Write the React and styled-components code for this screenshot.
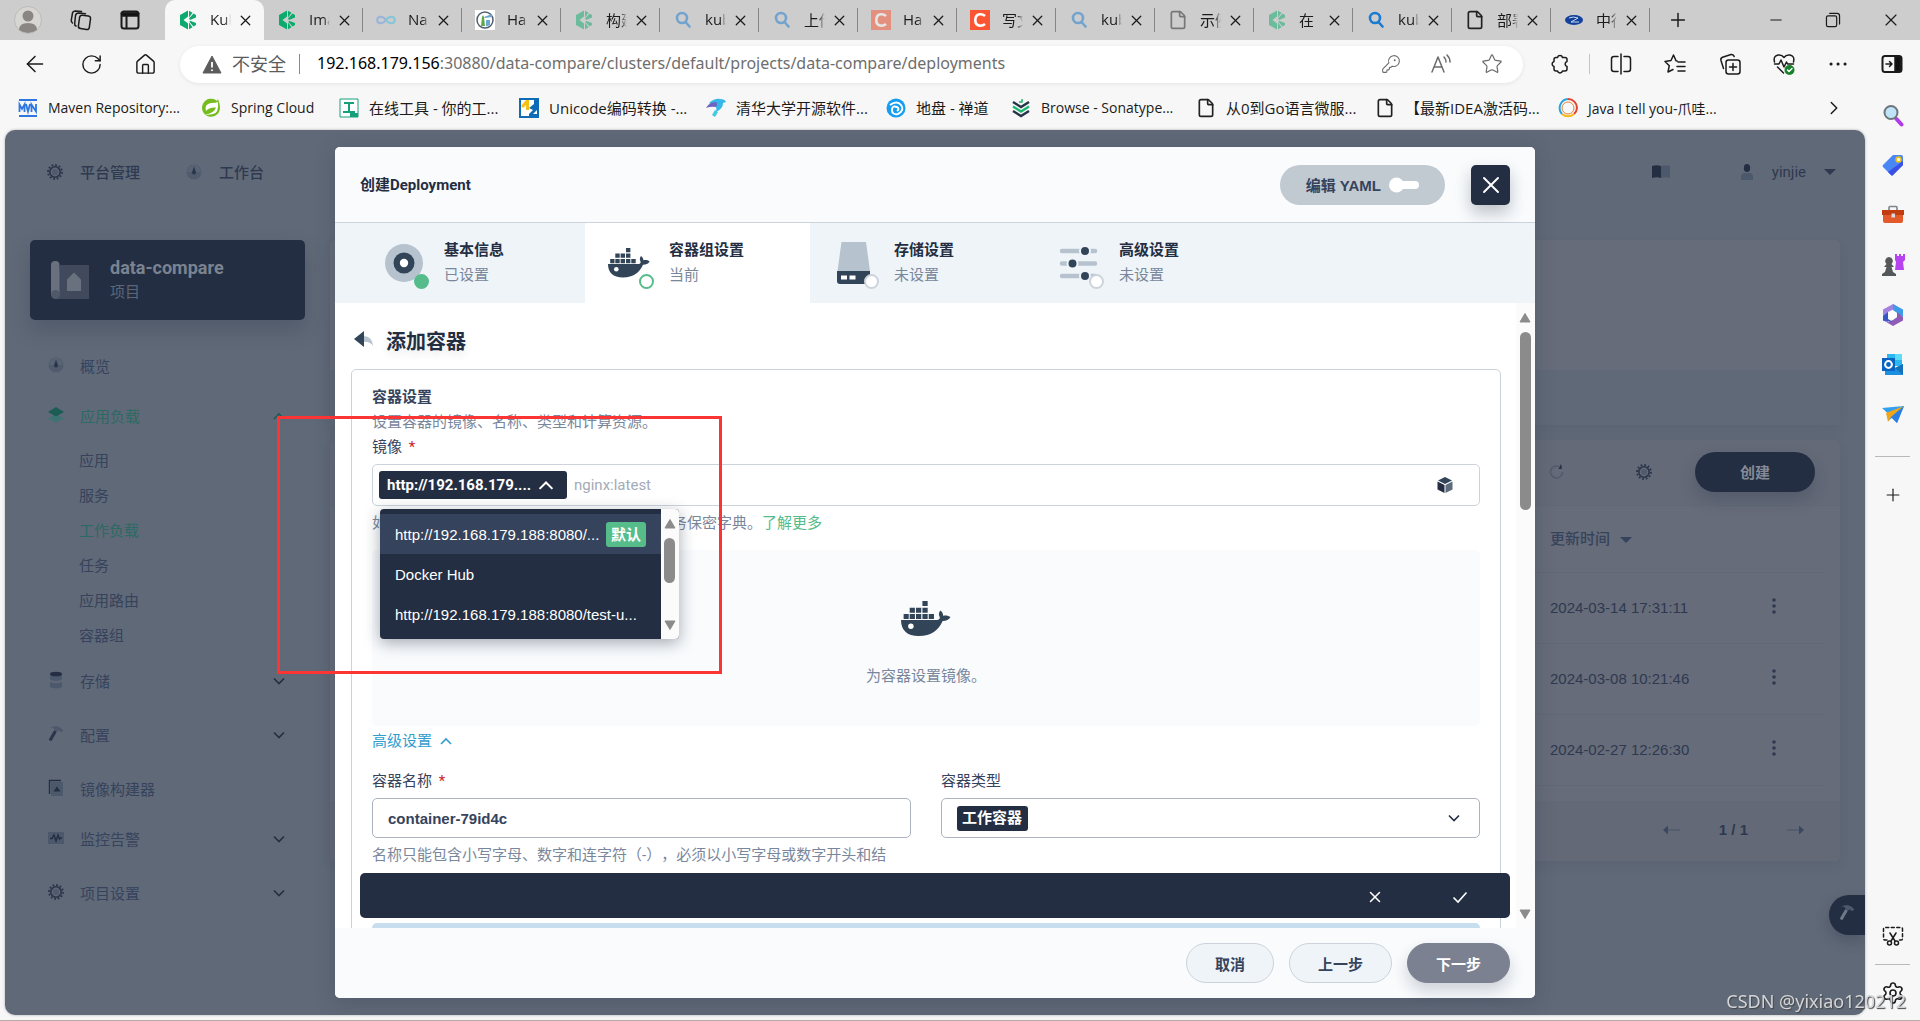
import React from "react";
import styled, { createGlobalStyle, css } from "styled-components";
import {
  ArrowLeft,
  ChevronRight,
  File,
  House,
  KeyRound,
  Minus,
  Plus,
  RotateCw,
  Search,
  Settings,
  Star,
  X,
} from "lucide-react";

const navy = "#242e42";
const dim = "#36435c";
const chromeFont = `"Open Sans", "Noto Sans CJK SC", sans-serif`;
const appFont = `Roboto, "Noto Sans CJK SC", sans-serif`;
const plainFont = `"Liberation Sans", "Noto Sans CJK SC", sans-serif`;

const tabs = [
  { icon: "kube", title: "Kub", active: true },
  { icon: "kube", title: "Ima" },
  { icon: "loop", title: "Na", faded: true },
  { icon: "harbor", title: "Ha" },
  { icon: "kube", title: "构建", faded: true },
  { icon: "search", title: "kub", faded: true },
  { icon: "search", title: "上传", faded: true },
  { icon: "csdn", title: "Ha", faded: true },
  { icon: "csdn", title: "写文" },
  { icon: "search", title: "kub", faded: true },
  { icon: "file", title: "示例", faded: true },
  { icon: "kube", title: "在", faded: true },
  { icon: "search", title: "kub" },
  { icon: "file", title: "部署" },
  { icon: "bank", title: "中行" },
];

const bookmarks = [
  { icon: "mvn", name: "Maven Repository:...", width: 132, latin: true },
  { icon: "spring", name: "Spring Cloud", width: 87, latin: true },
  { icon: "tool", name: "在线工具 - 你的工...", width: 129 },
  { icon: "unicode", name: "Unicode编码转换 -...", width: 136 },
  { icon: "bird", name: "清华大学开源软件...", width: 129 },
  { icon: "zen", name: "地盘 - 禅道", width: 74 },
  { icon: "nexus", name: "Browse - Sonatype...", width: 134, latin: true },
  { icon: "file", name: "从0到Go语言微服...", width: 128 },
  { icon: "file", name: "【最新IDEA激活码...", width: 132 },
  { icon: "ring", name: "Java I tell you-爪哇...", width: 136, latin: true },
];

const workloads = ["应用", "服务", "工作负载", "任务", "应用路由", "容器组"];

const menu = [
  { icon: "disk", name: "存储", open: true },
  { icon: "hammer", name: "配置", open: true },
  { icon: "image", name: "镜像构建器" },
  { icon: "monitor", name: "监控告警", open: true },
  { icon: "gear", name: "项目设置", open: true },
];

const rows = [
  "2024-03-14 17:31:11",
  "2024-03-08 10:21:46",
  "2024-02-27 12:26:30",
];

const steps = [
  { icon: "disc", name: "基本信息", status: "已设置", state: "done" },
  { icon: "docker", name: "容器组设置", status: "当前", state: "current" },
  { icon: "storage", name: "存储设置", status: "未设置" },
  { icon: "sliders", name: "高级设置", status: "未设置" },
];

/* ---------- icons ---------- */

const Chevron = ({ size = 14, up, color = "currentColor" }) => (
  <svg width={size} height={size} viewBox="0 0 14 14" fill="none">
    <path
      d={up ? "M2 10l5-5 5 5" : "M2 4.5l5 5 5-5"}
      stroke={color}
      strokeWidth="1.6"
    />
  </svg>
);

const Caret = ({ up, width = 12, color = "currentColor" }) => (
  <svg width={width} height={width} viewBox="0 0 12 12">
    <path
      d={up ? "M6 1.5L11 10H1z" : "M1 2h10L6 10.500z"}
      fill={color}
      stroke={color}
      strokeLinejoin="round"
    />
  </svg>
);

const FlatCaret = () => (
  <svg width="12" height="8" viewBox="0 0 12 8">
    <path d="M0 1h12L6 7z" fill="currentColor" />
  </svg>
);

const Gear = ({ size = 16 }) => (
  <svg width={size} height={size} viewBox="0 0 16 16" fill="none">
    <circle cx="8" cy="8" r="3" fill="#505b6d" />
    <circle cx="8" cy="8" r="5.200" stroke="#2a354a" strokeWidth="1.600" />
    <circle
      cx="8"
      cy="8"
      r="7"
      stroke="#2a354a"
      strokeWidth="1.800"
      strokeDasharray="1.830 1.830"
    />
  </svg>
);

const Docker = ({ width = 42 }) => (
  <svg width={width} viewBox="0 0 42 30">
    <g fill="#324558">
      <path d="M18 0h4.400v4.200H18zM7.300 5.600h4.400v4.200H7.300zM12.600 5.600H17v4.200h-4.400zM18 5.600h4.400v4.200H18zM2.200 11h4.300v4.200H2.200zM7.300 11h4.400v4.200H7.300zM12.600 11H17v4.200h-4.400zM18 11h4.400v4.200H18zM23.300 11h4.400v4.200h-4.400z" />
      <path d="M0 16H30.500C32.500 15.600 33 14.500 32.400 13.200 31.400 11.500 31.800 9.400 33 8 34.600 9.200 35.400 10.600 35.400 12.300 37.500 11.800 40 12.200 41.600 13.400 40.400 15.600 38 16.600 35 16.800 31.600 24.600 25.400 29.500 15 29.500 5 29.500 0 24.500 0 16Z" />
    </g>
    <circle cx="8.300" cy="21.300" r="2.300" fill="#fff" />
  </svg>
);

const Hammer = ({ light }) => (
  <svg width="16" height="18" viewBox="0 0 16 18">
    <path
      d="M7.500 6L2 15.500"
      stroke={light ? "#6f7886" : "#2a354a"}
      strokeWidth="3"
    />
    <path
      d="M2.500 2.500C6 .6 10.500.8 12.500 2.800L15.500 5.200 13 7.300 11 5.600 8.500 6.500 6.500 5.300C7 3.500 5 2.800 2.500 2.500Z"
      fill={light ? "#4d586c" : "#4c586b"}
    />
  </svg>
);

function MenuIcon({ name }) {
  switch (name) {
    case "gear":
      return <Gear />;
    case "hammer":
      return <Hammer />;
    case "dash":
      return (
        <svg width="16" height="16" viewBox="0 0 16 16">
          <circle cx="8" cy="8" r="7.500" fill="#505b6d" />
          <path d="M1 8a7 7 0 0114 0z" fill="#586375" />
          <path d="M8 2.500l2 6a2 2 0 01-4 0z" fill="#2a354a" />
        </svg>
      );
    case "layers":
      return (
        <svg width="16" height="16" viewBox="0 0 16 16">
          <path d="M8 7l8 4.500-8 4-8-4z" fill="#3f7371" />
          <path d="M8 0l8 5-8 4.500L0 5z" fill="#1b5c55" />
        </svg>
      );
    case "disk":
      return (
        <svg width="14" height="18" viewBox="0 0 14 18">
          <path d="M1 3v5c0 2.500 12 2.500 12 0V3zM1 11v4.500c0 2.500 12 2.500 12 0V11c-2 1.500-10 1.500-12 0z" fill="#4c586b" />
          <ellipse cx="7" cy="3" rx="6" ry="2.300" fill="#242e42" />
        </svg>
      );
    case "image":
      return (
        <svg width="16" height="18" viewBox="0 0 16 18">
          <path d="M3 3h12v14H3z" fill="#4c586b" />
          <path d="M1.500 15V1.500H13" stroke="#242e42" strokeWidth="1.400" fill="none" />
          <path d="M9 7.500l3.500 5h-7z" fill="#242e42" />
        </svg>
      );
    default:
      return (
        <svg width="16" height="12" viewBox="0 0 16 12">
          <path d="M0 0h16v12H0z" fill="#4c586b" />
          <path d="M2 6.500h2L6 3l2 6 2-6 1.500 4 1-1H14" stroke="#242e42" strokeWidth="1.400" fill="none" />
        </svg>
      );
  }
}

function StepIcon({ name }) {
  if (name === "docker") return <Docker />;
  if (name === "disc")
    return (
      <svg width="40" height="40" viewBox="0 0 40 40">
        <circle cx="20" cy="20" r="19" fill="#b6c2cd" />
        <circle cx="20" cy="20" r="10.500" fill="#324558" />
        <circle cx="20" cy="20" r="4.200" fill="#fff" />
      </svg>
    );
  if (name === "storage")
    return (
      <svg width="40" height="42" viewBox="0 0 40 42">
        <path d="M7.500 0h24.500L36 29H3.500z" fill="#b6c2cd" />
        <path d="M3 29h33v10q0 3-3 3H6q-3 0-3-3z" fill="#324558" />
        <path d="M7 33.500h6v4H7zM15.500 33.500h6v4h-6z" fill="#fff" />
      </svg>
    );
  return (
    <svg width="40" height="34" viewBox="0 0 40 34">
      <g stroke="#b6c2cd" strokeWidth="4.500" strokeLinecap="round">
        <path d="M3 5h33M3 17.500h33M3 30h33" />
      </g>
      <g fill="#324558" stroke="#eff4f9" strokeWidth="2">
        <circle cx="26" cy="5" r="5" />
        <circle cx="13.500" cy="17.500" r="5" />
        <circle cx="26" cy="30" r="5" />
      </g>
    </svg>
  );
}

function SiteIcon({ name }) {
  const box = { width: 20, height: 20, viewBox: "0 0 20 20" };
  switch (name) {
    case "kube":
      return (
        <svg {...box} fill="#0caa6c">
          <path d="M10 .5L2 5v10l8 4.500v-6L5.500 10 10 6.500z" />
          <path d="M11 .8l3.500 2L11 7.500zM15.500 3.500L18 5v2.500l-6 2.500-1-1.500zM11 12.500l3.500 4.700-3.500 2zM12 10.800l6 2.200v2l-2.500 1.500-4-4.500z" />
        </svg>
      );
    case "loop":
      return (
        <svg {...box} fill="none" strokeWidth="2.200">
          <path d="M10 10C7.500 6 1.500 5.500 1.200 10S7.500 14 10 10" stroke="#6d9ce8" />
          <path d="M10 10c2.500-4 8.500-4.500 8.800 0S12.500 14 10 10" stroke="#48bfe0" />
        </svg>
      );
    case "harbor":
      return (
        <svg {...box}>
          <path d="M0 0h20v20H0z" fill="#fff" />
          <circle cx="10" cy="10" r="8" fill="none" stroke="#50616d" strokeWidth="1.500" />
          <path d="M7 7l1-2 1 2 1 9H6z" fill="#5fa845" />
          <path d="M9 7l8-3v3l-7 1zM11 10h4v5q-2 1.500-4 1z" fill="#6aa7d3" />
        </svg>
      );
    case "search":
      return (
        <svg {...box} fill="none" stroke="#1a7bd2" strokeWidth="2.600">
          <circle cx="9" cy="8" r="5" />
          <path d="M12.500 12l4 4.500" strokeLinecap="round" />
        </svg>
      );
    case "csdn":
      return (
        <svg {...box}>
          <path d="M0 0h20v20H0z" fill="#fc5531" />
          <path d="M15 6Q13 4.200 10 4.300 5.500 4.500 5.300 10T10.500 15.700Q13 15.700 15 14" fill="none" stroke="#fff" strokeWidth="2.600" />
        </svg>
      );
    case "file":
      return <File size={20} strokeWidth={2} color="#222" />;
    case "bank":
      return (
        <svg {...box}>
          <ellipse cx="10" cy="10" rx="9" ry="5" fill="#12409b" />
          <path d="M5 8q4-2 9 0l-7 4h8" stroke="#c9d8f2" fill="none" />
        </svg>
      );
    case "mvn":
      return (
        <svg {...box}>
          <path d="M1 1h18v2H1zM1 17h18v2H1z" fill="#2f77e0" />
          <path d="M1.500 14V6.500L4 11l2.500-4.500V14M8 6l2 7.500L12 6M13.500 14V6.500l4.500 7V6" fill="none" stroke="#2f77e0" strokeWidth="1.800" />
        </svg>
      );
    case "spring":
      return (
        <svg {...box}>
          <path d="M17 1q2 5 2 9a9 9 0 11-3-7z" fill="#77bc1f" />
          <path d="M17 4q1 11-5 12-4 1-8 .5 9-1 11-7Q8 9 5 13q-2-7 5-8 5 0 7-1z" fill="#fff" />
        </svg>
      );
    case "tool":
      return (
        <svg {...box}>
          <path d="M1 1h18v18H1z" fill="#fff" stroke="#16a07a" />
          <path d="M5 5h10M10 5v9M4 14h12" stroke="#16a07a" strokeWidth="2" />
          <path d="M11 15h8v4h-8z" fill="#16a07a" />
        </svg>
      );
    case "unicode":
      return (
        <svg {...box}>
          <path d="M1 1h18v18H1z" fill="#fff" stroke="#0d6cb5" strokeWidth="2" />
          <path d="M2 8l5-6h3v10H7V7L4 10z" fill="#f7c018" />
          <path d="M10 10l5-4V2h3v10l-4 4h4v2h-8v-2l4-4z" fill="#0d6cb5" />
        </svg>
      );
    case "bird":
      return (
        <svg {...box}>
          <path d="M3 5Q9 0 14 1q5 0 6 3l-3 1q0 6-7 9 1-5-1-6z" fill="#35b8e8" />
          <path d="M0 10Q3 4 10 4q2 2 0 5-5-1-10 1z" fill="#6f63c2" />
          <path d="M9 12l3 2-3 5-3-2z" fill="#41c9df" />
        </svg>
      );
    case "zen":
      return (
        <svg {...box}>
          <circle cx="10" cy="10" r="9.500" fill="#159df0" />
          <path d="M4 7q7-5 11 0t-3 9q-6 1-6-4t5-3q3 2 0 4" fill="none" stroke="#fff" strokeWidth="2" />
        </svg>
      );
    case "nexus":
      return (
        <svg {...box} fill="none" strokeWidth="2.400">
          <path d="M2 4l8 5 8-5" stroke="#243447" />
          <path d="M2 8.500l8 5 8-5" stroke="#1bb76e" />
          <path d="M2 13l8 5 8-5" stroke="#243447" />
          <path d="M8 4h3V1" stroke="#1bb76e" strokeWidth="1.500" />
        </svg>
      );
    default:
      return (
        <svg {...box} fill="none" strokeWidth="2">
          <path d="M10 1a9 9 0 019 9 9 9 0 01-3 6" stroke="#e0432f" />
          <path d="M16 16a9 9 0 01-12 0" stroke="#f6b81a" />
          <path d="M4 16A9 9 0 0110 1" stroke="#2aa5df" />
          <circle cx="10" cy="10" r="6" stroke="#e4823a" strokeWidth="1" />
        </svg>
      );
  }
}

function RailIcon({ name }) {
  const box = { width: 24, height: 24, viewBox: "0 0 24 24" };
  switch (name) {
    case "搜索":
      return (
        <svg {...box}>
          <path d="M15.500 16l5 5.500" stroke="#b03be8" strokeWidth="4" strokeLinecap="round" />
          <circle cx="10" cy="9.500" r="6.500" fill="#bfe3f7" stroke="#6e747a" strokeWidth="2" />
        </svg>
      );
    case "购物":
      return (
        <svg {...box}>
          <path d="M12 2h8q2 0 2 2v8L12 22q-1 1-2 0l-8-8q-1-1 0-2z" fill="#4a86f5" />
          <path d="M22 8v4L12 22q-1 1-2 0l-3-3z" fill="#3a4fe6" />
          <circle cx="17.500" cy="6.500" r="2.400" fill="#fff" stroke="#e8c020" strokeWidth="1.600" />
        </svg>
      );
    case "工具":
      return (
        <svg {...box}>
          <path d="M8 7V4.500q0-1 1-1h6q1 0 1 1V7" fill="none" stroke="#7f8488" strokeWidth="1.600" />
          <path d="M1 7h22v5H1z" fill="#c13d10" />
          <path d="M2 12h20v6q0 2-2 2H4q-2 0-2-2z" fill="#e2592a" />
          <path d="M10.500 10.500h3.500v4h-3.500z" fill="#d9dcde" />
        </svg>
      );
    case "游戏":
      return (
        <svg {...box}>
          <path d="M14 1h2v2h2V1h2v2h2V1h2v6l-2 2 1 8h-9l1-8-1-2z" fill="#b743f0" />
          <path d="M8 4a4 4 0 012.500 7L13 14H10.500L12 19l3 2v2H1v-2l3-2 1.500-5H3l2.500-3A4 4 0 018 4z" fill="#55585a" />
        </svg>
      );
    case "Microsoft 365":
      return (
        <svg {...box}>
          <path d="M12 1L2 6.500v11L7 20V9l5-2.500 8 4.500V6z" fill="#a182df" />
          <path d="M12 1l10 5.500V14l-6-4-4-3z" fill="#3e9be8" />
          <path d="M22 14v3.500L12 23l-6-3.500 6-2.500 4-3V9z" fill="#8f5bb7" />
          <path d="M2 17.500V13l5-4v7l5 3z" fill="#3457c4" />
          <path d="M12 8l4 2v4l-4 2.500L8 14v-4z" fill="#fff" />
        </svg>
      );
    case "Outlook":
      return (
        <svg {...box}>
          <path d="M6 1h15v12H6z" fill="#2cb9f0" />
          <path d="M14 1h7v6h-7z" fill="#5ddcf9" />
          <path d="M4 12l10 3 8-4v11H4z" fill="#1d8fe0" />
          <path d="M22 11v11l-8-7z" fill="#1470b8" />
          <path d="M1 5h13v13H1z" fill="#0a63c0" />
          <circle cx="7.500" cy="11.500" r="3.400" fill="none" stroke="#fff" strokeWidth="2" />
        </svg>
      );
    default:
      return (
        <svg {...box}>
          <path d="M1 5l22-2-7 17-5-5-4 3 .500-7z" fill="#33a0ee" />
          <path d="M5 10L23 3 10 14l-3 5z" fill="#f2a516" />
          <path d="M10 14L23 3l-7 17z" fill="#2b7fe0" />
        </svg>
      );
  }
}

const Outline = ({ children, size = 22, color = "#1b1b1b" }) => (
  <svg
    width={size}
    height={size}
    viewBox="0 0 22 22"
    fill="none"
    stroke={color}
    strokeWidth="1.500"
    strokeLinecap="round"
    strokeLinejoin="round"
  >
    {children}
  </svg>
);

/* ---------- browser ---------- */

function BrowserTop() {
  return (
    <>
      <TabStrip>
        <TabTools>
          <svg width="28" height="28" viewBox="0 0 28 28">
            <circle cx="14" cy="14" r="13.500" fill="#d8d6d3" stroke="#bdbab7" />
            <circle cx="14" cy="10" r="5.500" fill="#8a8684" />
            <path d="M5 24q0-7 9-7t9 7q-9 6-18 0z" fill="#8a8684" />
          </svg>
          <Outline>
            <rect x="9" y="6.500" width="11" height="13.500" rx="2.500" transform="rotate(8 14 13)" />
            <path d="M6 17q-1.500-.5-1.300-2.500l.8-8Q6 4 8.500 4l7 .7M2.500 14Q1 13 1.300 11L2.500 4Q3 2 5.500 2l6 .6" />
          </Outline>
          <Outline>
            <rect x="2.500" y="2.500" width="17" height="17" rx="2.500" strokeWidth="2" />
            <path d="M2.500 4.500h17M7.500 7v12" strokeWidth="2" />
            <path d="M3 4h16v3H3z" fill="#111" />
          </Outline>
        </TabTools>
        <Tabs>
          {tabs.map((tab, i) => (
            <Tab key={i} $active={tab.active}>
              <Favicon $faded={tab.faded}>
                <SiteIcon name={tab.icon} />
              </Favicon>
              <TabTitle>{tab.title}</TabTitle>
              <IconButton aria-label="关闭标签页">
                <X size={17} strokeWidth={1.8} />
              </IconButton>
            </Tab>
          ))}
        </Tabs>
        <NewTab aria-label="新建标签页">
          <Plus size={22} strokeWidth={1.6} />
        </NewTab>
        <WindowButtons>
          <IconButton aria-label="最小化">
            <Minus size={18} strokeWidth={1.4} />
          </IconButton>
          <IconButton aria-label="还原">
            <Outline size={18}>
              <rect x="3" y="6" width="12.500" height="13" rx="2" />
              <path d="M7 3h9q3 0 3 3v10" />
            </Outline>
          </IconButton>
          <IconButton aria-label="关闭">
            <X size={20} strokeWidth={1.4} />
          </IconButton>
        </WindowButtons>
      </TabStrip>
      <Toolbar>
        <NavButtons>
          <IconButton aria-label="返回">
            <ArrowLeft size={26} strokeWidth={1.4} />
          </IconButton>
          <IconButton aria-label="刷新">
            <RotateCw size={23} strokeWidth={1.5} />
          </IconButton>
          <IconButton aria-label="主页">
            <House size={23} strokeWidth={1.5} />
          </IconButton>
        </NavButtons>
        <AddressBar>
          <svg width="20" height="19" viewBox="0 0 20 19">
            <path d="M10 1l9 17H1z" fill="#5c5c5c" stroke="#5c5c5c" strokeLinejoin="round" />
            <path d="M10 7v5.500M10 14.500v1.500" stroke="#fff" strokeWidth="1.800" />
          </svg>
          <Insecure>不安全</Insecure>
          <Url>
            <b>192.168.179.156</b>
            :30880/data-compare/clusters/default/projects/data-compare/deployments
          </Url>
          <AddressActions>
            <IconButton aria-label="密码">
              <KeyRound size={20} strokeWidth={1.3} />
            </IconButton>
            <IconButton aria-label="大声朗读">
              <Outline color="#6a6a6a">
                <path d="M2 19L8 4l6 15M4 14h8M14 4q2 2 2 5M17 2q3 3 3 7" />
              </Outline>
            </IconButton>
            <IconButton aria-label="收藏">
              <Star size={22} strokeWidth={1.3} />
            </IconButton>
          </AddressActions>
        </AddressBar>
        <ToolIcons>
          <IconButton aria-label="扩展">
            <Outline>
              <path d="M7 4.500H8.500A2.600 2.600 0 0113.500 4.500H16Q18 4.500 18 6.500V8.500A2.600 2.600 0 0018 13.500V16Q18 18 16 18H13.500A2.600 2.600 0 018.500 18H7Q5 18 5 16V13.500A2.600 2.600 0 015 8.500V6.500Q5 4.500 7 4.500Z" />
            </Outline>
          </IconButton>
          <Bar />
          <IconButton aria-label="拆分屏幕">
            <Outline>
              <path d="M11 1v20M8 3.500H4q-2.500 0-2.500 2.500v10q0 2.500 2.500 2.500h4M14 3.500h4q2.500 0 2.500 2.500v10q0 2.500-2.500 2.500h-4" />
            </Outline>
          </IconButton>
          <IconButton aria-label="收藏夹">
            <Outline>
              <path d="M13 8l-1-.3L9.500 2 7 7.500l-6 1 4.300 4.200L4 19l5-2.500M14 9h7M13 13.500h8M14 18h7" />
            </Outline>
          </IconButton>
          <IconButton aria-label="集锦">
            <Outline>
              <rect x="7" y="7" width="14" height="14" rx="2.500" />
              <path d="M14 10.500v7M10.500 14h7M4.500 15.500L2 7.500Q1.300 5 3.500 4.200L12 1.500q2.500-.5 3.200 2" />
            </Outline>
          </IconButton>
          <IconButton aria-label="浏览器概要">
            <Outline>
              <path d="M1.500 9Q0 3 5 2q4-.5 6 2.500Q13 1.500 17 2q5 1 3.500 7M1.500 11H6l2-4 3 7 2.500-5 1 2h6M4.500 14l6 6" />
              <circle cx="16.500" cy="17" r="5" fill="#16802a" stroke="none" />
              <path d="M14.500 17l1.500 1.500 3-3" stroke="#fff" />
            </Outline>
          </IconButton>
          <IconButton aria-label="设置及其他">
            <Outline>
              <path d="M4 11h.100M11 11h.100M18 11h.100" strokeWidth="3" />
            </Outline>
          </IconButton>
          <IconButton aria-label="边栏">
            <Outline>
              <rect x="1.500" y="3" width="19" height="16" rx="2.500" strokeWidth="2" />
              <path d="M14 4h5.500v14H14z" fill="#111" />
              <path d="M5 11h6M8.500 8.500L11 11l-2.500 2.500" />
            </Outline>
          </IconButton>
        </ToolIcons>
      </Toolbar>
    </>
  );
}

function BookmarkBar() {
  return (
    <Bookmarks>
      {bookmarks.map((mark) => (
        <Bookmark key={mark.name} href="#">
          <SiteIcon name={mark.icon} />
          <BookmarkName $width={mark.width} $latin={mark.latin}>
            {mark.name}
          </BookmarkName>
        </Bookmark>
      ))}
      <MoreBookmarks aria-label="更多书签">
        <ChevronRight size={22} strokeWidth={1.6} />
      </MoreBookmarks>
    </Bookmarks>
  );
}

function Rail() {
  return (
    <RailWrap>
      {["搜索", "购物", "工具", "游戏", "Microsoft 365", "Outlook", "Drop"].map(
        (name) => (
          <RailButton key={name} aria-label={name}>
            <RailIcon name={name} />
          </RailButton>
        )
      )}
      <RailLine $top />
      <RailButton aria-label="自定义">
        <Plus size={20} strokeWidth={1.4} />
      </RailButton>
      <RailBottom>
        <RailButton aria-label="屏幕截图">
          <Outline>
            <path d="M5 15H3q-1.500 0-1.500-1.500V4Q1.500 2.500 3 2.500h16q1.500 0 1.500 1.500v9.500q0 1.500-1.500 1.500h-2" strokeDasharray="3 2.500" />
            <path d="M8 8l5 8M14 8l-5 8" />
            <circle cx="7.500" cy="18" r="2" />
            <circle cx="14.500" cy="18" r="2" />
          </Outline>
        </RailButton>
        <RailLine />
        <RailButton aria-label="设置">
          <Settings size={24} strokeWidth={1.6} />
        </RailButton>
      </RailBottom>
    </RailWrap>
  );
}

/* ---------- console page ---------- */

function SideMenu() {
  return (
    <Side>
      <Project>
        <svg width="38" height="38" viewBox="0 0 38 38">
          <path d="M9 4h29v34H5z" fill="#404a5c" />
          <rect x="0" y="0" width="8.500" height="36" rx="4" fill="#69717f" />
          <circle cx="4.500" cy="33.500" r="4.500" fill="#4f596a" />
          <path d="M23 11.500l7 7V30H16V18.500z" fill="#69717f" />
        </svg>
        <div>
          <ProjectName>data-compare</ProjectName>
          <ProjectKind>项目</ProjectKind>
        </div>
      </Project>
      <MenuLink href="#">
        <MenuIcon name="dash" />
        概览
      </MenuLink>
      <MenuLink href="#" $on>
        <MenuIcon name="layers" />
        应用负载
        <Chevron up color="#1b5c55" />
      </MenuLink>
      <SubMenu>
        {workloads.map((name) => (
          <SubLink key={name} href="#" $on={name === "工作负载"}>
            {name}
          </SubLink>
        ))}
      </SubMenu>
      {menu.map((item) => (
        <MenuLink key={item.name} href="#" $spaced={item.open}>
          <MenuIcon name={item.icon} />
          {item.name}
          {item.open && <Chevron color="#242e42" />}
        </MenuLink>
      ))}
    </Side>
  );
}

function ConsolePage() {
  return (
    <Console>
      <TopNav>
        <TopLink href="#">
          <MenuIcon name="gear" />
          平台管理
        </TopLink>
        <TopLink href="#">
          <MenuIcon name="dash" />
          工作台
        </TopLink>
        <Account>
          <svg width="18" height="14" viewBox="0 0 18 14">
            <path d="M0 1q5-1.500 9 0v12q-4-1.500-9 0z" fill="#242e42" />
            <path d="M9 1q4-1.500 9 0v12q-5-1.500-9 0z" fill="#4c586b" />
          </svg>
          <User>
            <svg width="14" height="16" viewBox="0 0 14 16">
              <ellipse cx="7" cy="4" rx="3.200" ry="3.900" fill="#242e42" />
              <path d="M1 16v-3q0-4 4-4h4q4 0 4 4v3z" fill="#4c586b" />
            </svg>
            yinjie
            <FlatCaret />
          </User>
        </Account>
      </TopNav>
      <Columns>
        <SideMenu />
        <Main>
          <SummaryCard>
            <SummaryFoot />
          </SummaryCard>
          <ListCard>
            <ListTools>
              <svg width="16" height="16" viewBox="0 0 16 16" fill="none">
                <path d="M10 2.500A6 6 0 1013.500 8" stroke="#505b6d" strokeWidth="1.500" />
                <path d="M9.500 5L13 4.800 12 0z" fill="#242e42" />
              </svg>
              <Gear />
              <CreateButton>创建</CreateButton>
            </ListTools>
            <Table>
              <thead>
                <tr>
                  <th>
                    更新时间 <FlatCaret />
                  </th>
                  <th aria-label="操作" />
                </tr>
              </thead>
              <tbody>
                {rows.map((time) => (
                  <tr key={time}>
                    <td>{time}</td>
                    <td>
                      <IconButton aria-label="更多操作">
                        <svg width="16" height="16" viewBox="0 0 16 16" fill="#2e3950">
                          <circle cx="8" cy="2" r="1.800" />
                          <circle cx="8" cy="8" r="1.800" />
                          <circle cx="8" cy="14" r="1.800" />
                        </svg>
                      </IconButton>
                    </td>
                  </tr>
                ))}
              </tbody>
            </Table>
            <Pager>
              <svg width="17" height="10" viewBox="0 0 17 10">
                <path d="M4 5h13" stroke="#505b6d" strokeWidth="1.500" />
                <path d="M0 5l5-4.500v9z" fill="#3b4760" />
              </svg>
              1 / 1
              <svg width="17" height="10" viewBox="0 0 17 10">
                <path d="M0 5h13" stroke="#505b6d" strokeWidth="1.500" />
                <path d="M17 5l-5-4.500v9z" fill="#3b4760" />
              </svg>
            </Pager>
          </ListCard>
        </Main>
      </Columns>
      <Toolbox aria-label="工具箱">
        <Hammer light />
      </Toolbox>
    </Console>
  );
}

/* ---------- dialog ---------- */

function RegistryMenu() {
  return (
    <Dropdown>
      <Options role="listbox" aria-label="镜像服务">
        <Option role="option" aria-selected="true" $on>
          http://192.168.179.188:8080/...
          <DefaultTag>默认</DefaultTag>
        </Option>
        <Option role="option">Docker Hub</Option>
        <Option role="option">http://192.168.179.188:8080/test-u...</Option>
      </Options>
      <Scrollbar $small>
        <Caret up color="#8b8b8b" />
        <Thumb $height={45} />
        <Spacer />
        <Caret color="#8b8b8b" />
      </Scrollbar>
    </Dropdown>
  );
}

function ContainerForm() {
  return (
    <Panel>
      <PanelTitle>容器设置</PanelTitle>
      <PanelText>设置容器的镜像、名称、类型和计算资源。</PanelText>
      <Label htmlFor="image">
        镜像 <Required>*</Required>
      </Label>
      <ImageField>
        <RegistryButton aria-expanded="true">
          <span>http://192.168.179....</span>
          <Chevron up size={18} />
        </RegistryButton>
        <ImageInput id="image" placeholder="nginx:latest" />
        <svg width="16" height="16" viewBox="0 0 16 16">
          <path d="M8 0l7 3.500L8 7 1 3.500z" fill="#324558" />
          <path d="M.500 4.500L7.500 8v8l-7-3.500z" fill={navy} />
          <path d="M15.500 4.500L8.500 8v8l7-3.500z" fill="#5c6c7c" />
        </svg>
        <RegistryMenu />
      </ImageField>
      <Hint>
        如需使用私有镜像服务，您需要先创建镜像服务保密字典。
        <a href="#">了解更多</a>
      </Hint>
      <EmptyImage>
        <Docker width={50} />
        为容器设置镜像。
      </EmptyImage>
      <Advanced>
        高级设置 <Chevron up />
      </Advanced>
      <Pair>
        <div>
          <Label htmlFor="name">
            容器名称 <Required>*</Required>
          </Label>
          <TextInput id="name" defaultValue="container-79id4c" />
          <Hint>
            名称只能包含小写字母、数字和连字符（-），必须以小写字母或数字开头和结
          </Hint>
        </div>
        <div>
          <Label htmlFor="type">容器类型</Label>
          <SelectBox>
            <Select id="type">
              <option>工作容器</option>
            </Select>
            <Chevron />
          </SelectBox>
        </div>
      </Pair>
      <NextNotice />
    </Panel>
  );
}

function CreateDialog() {
  return (
    <Layer>
      <Dialog role="dialog" aria-labelledby="dialog-title">
        <DialogHead>
          <DialogTitle id="dialog-title">创建Deployment</DialogTitle>
          <YamlButton>
            编辑 YAML
            <svg width="30" height="16" viewBox="0 0 30 16" fill="#fff">
              <rect x="8" y="4" width="22" height="8" rx="4" />
              <circle cx="7.500" cy="8" r="7.500" />
            </svg>
          </YamlButton>
          <CloseButton aria-label="关闭">
            <X size={28} strokeWidth={1.7} />
          </CloseButton>
        </DialogHead>
        <Steps>
          {steps.map((step) => (
            <Step key={step.name} $on={step.state === "current"}>
              <StepPicture>
                <StepIcon name={step.icon} />
                <StepDot $state={step.state} />
              </StepPicture>
              <div>
                <StepName>{step.name}</StepName>
                <StepStatus>{step.status}</StepStatus>
              </div>
            </Step>
          ))}
        </Steps>
        <DialogBody>
          <Content>
            <Heading>
              <svg width="20" height="18" viewBox="0 0 20 18">
                <path d="M8 5q10-1 11 10-3-5-11-4z" fill="#b6c2cd" />
                <path d="M0 8l10-8v16z" fill="#324558" />
              </svg>
              添加容器
            </Heading>
            <ContainerForm />
          </Content>
          <Scrollbar>
            <Caret up color="#8b8b8b" />
            <Thumb $height={178} />
            <Spacer />
            <Caret color="#8b8b8b" />
          </Scrollbar>
          <ConfirmBar>
            <IconButton aria-label="取消">
              <X size={18} strokeWidth={2} />
            </IconButton>
            <IconButton aria-label="确定">
              <svg width="18" height="18" viewBox="0 0 18 18" fill="none">
                <path d="M2.500 9.500L7 14l8.500-9.500" stroke="#fff" strokeWidth="1.600" />
              </svg>
            </IconButton>
          </ConfirmBar>
        </DialogBody>
        <DialogFoot>
          <FootButton>取消</FootButton>
          <FootButton>上一步</FootButton>
          <FootButton $primary>下一步</FootButton>
        </DialogFoot>
        <RedMark />
      </Dialog>
    </Layer>
  );
}

function App() {
  return (
    <Browser>
      <GlobalStyle />
      <BrowserTop />
      <Below>
        <View>
          <BookmarkBar />
          <Frame>
            <ConsolePage />
            <CreateDialog />
          </Frame>
        </View>
        <Rail />
      </Below>
      <Watermark>CSDN @yixiao120212</Watermark>
    </Browser>
  );
}

const GlobalStyle = createGlobalStyle`
  * {
    box-sizing: border-box;
  }
  body {
    margin: 0;
    background: #f7f7f7;
    font-family: ${appFont};
    font-size: 15px;
    text-spacing-trim: space-all;
  }
  button,
  input,
  select {
    margin: 0;
    padding: 0;
    border: 0;
    background: none;
    color: inherit;
    font: inherit;
  }
  a {
    color: inherit;
    text-decoration: none;
  }
  svg {
    flex: none;
  }
`;

const Browser = styled.div`
  display: flex;
  flex-direction: column;
  height: 100vh;
  padding-bottom: 5px;
  border-bottom: 1px solid #b9aaa6;
  background: #f7f7f7;
  color: #1b1b1b;
`;

const IconButton = styled.button`
  display: flex;
  align-items: center;
  justify-content: center;
`;

const TabStrip = styled.div`
  display: flex;
  flex: none;
  height: 40px;
  background: #cdcdcd;
  font-family: ${chromeFont};
`;
const TabTools = styled.div`
  display: flex;
  flex: none;
  align-items: center;
  justify-content: space-between;
  width: 165px;
  padding: 0 24px 0 14px;
`;
const Tabs = styled.div`
  display: flex;
  flex: 1;
  min-width: 0;
`;
const Tab = styled.div`
  display: flex;
  flex: 1;
  align-items: center;
  min-width: 0;
  padding: 0 10px 0 13px;
  ${(props) =>
    props.$active &&
    css`
      border-radius: 10px 10px 0 0;
      background: #f7f7f7;
    `}
  & + & {
    background: linear-gradient(#858585, #858585) right center / 1px 24px
      no-repeat;
  }
`;
const Favicon = styled.span`
  display: flex;
  justify-content: center;
  flex: none;
  width: 20px;
  opacity: ${(props) => (props.$faded ? 0.5 : 1)};
`;
const TabTitle = styled.span`
  flex: 1;
  min-width: 0;
  margin: 0 6px 0 12px;
  padding-bottom: 2px;
  overflow: hidden;
  white-space: nowrap;
  mask-image: linear-gradient(90deg, #000 70%, transparent);
`;
const NewTab = styled(IconButton)`
  flex: none;
  width: 56px;
`;
const WindowButtons = styled.div`
  display: flex;
  flex: none;
  justify-content: space-between;
  width: 214px;
  padding: 0 19px 0 61px;
`;

const Toolbar = styled.div`
  display: flex;
  flex: none;
  align-items: center;
  height: 48px;
  font-family: ${chromeFont};
`;
const NavButtons = styled.div`
  display: flex;
  flex: none;
  justify-content: space-between;
  width: 180px;
  padding: 0 23px 0 22px;
`;
const AddressBar = styled.div`
  display: flex;
  flex: 1;
  align-items: center;
  height: 37px;
  padding: 0 20px 0 22px;
  border-radius: 19px;
  background: #fff;
  box-shadow: 0 1px 4px rgba(0, 0, 0, 0.08);
`;
const Insecure = styled.span`
  margin-left: 10px;
  padding-right: 13px;
  border-right: 1px solid #8a8a8a;
  color: #5c5c5c;
  font-size: 18px;
  line-height: 20px;
`;
const Url = styled.span`
  flex: 1;
  margin-left: 17px;
  padding-bottom: 2px;
  color: #6e6e6e;
  font-family: "Noto Sans", sans-serif;
  font-size: 16px;
  b {
    color: #000;
    font-weight: normal;
  }
`;
const AddressActions = styled.div`
  display: flex;
  gap: 29px;
  color: #6a6a6a;
`;
const ToolIcons = styled.div`
  display: flex;
  flex: none;
  align-items: center;
  justify-content: space-between;
  width: 397px;
  padding: 0 17px 0 26px;
`;
const Bar = styled.span`
  width: 1px;
  height: 20px;
  margin: 0 -12px 0 -14px;
  background: #c4c4c4;
`;

const Below = styled.div`
  display: flex;
  flex: 1;
  min-height: 0;
`;
const View = styled.div`
  display: flex;
  flex: 1;
  flex-direction: column;
  min-width: 0;
`;
const Bookmarks = styled.div`
  display: flex;
  flex: none;
  align-items: center;
  gap: 21px;
  height: 42px;
  padding: 0 18px 3px;
  font-family: ${chromeFont};
`;
const Bookmark = styled.a`
  display: flex;
  align-items: center;
  gap: 10px;
`;
const BookmarkName = styled.span`
  width: ${(props) => props.$width}px;
  font-size: ${(props) => (props.$latin ? 14 : 15)}px;
  white-space: nowrap;
`;
const MoreBookmarks = styled(IconButton)`
  margin-left: auto;
  margin-right: 2px;
`;

const RailWrap = styled.aside`
  display: flex;
  flex: none;
  flex-direction: column;
  align-items: center;
  width: 55px;
  padding-top: 2px;
`;
const RailButton = styled(IconButton)`
  flex: none;
  width: 50px;
  height: 50px;
`;
const RailLine = styled.div`
  flex: none;
  width: 35px;
  height: 1px;
  margin: ${(props) => (props.$top ? "16px 0 13px" : "3px 0")};
  background: #b9b9b9;
`;
const RailBottom = styled.div`
  display: flex;
  flex-direction: column;
  align-items: center;
  margin-top: auto;
  margin-bottom: -3px;
`;

const Frame = styled.div`
  position: relative;
  display: flex;
  flex: 1;
  min-height: 0;
  margin-left: 5px;
  overflow: hidden;
  border-radius: 10px;
  background: #606978;
  box-shadow: 0 0 3px rgba(0, 0, 0, 0.3);
`;
const Console = styled.div`
  display: flex;
  flex: 1;
  flex-direction: column;
  color: ${dim};
`;
const TopNav = styled.header`
  display: flex;
  flex: none;
  align-items: center;
  gap: 46px;
  height: 85px;
  padding: 0 29px 2px 42px;
`;
const TopLink = styled.a`
  display: flex;
  align-items: center;
  gap: 17px;
  color: #2e3950;
  font-weight: 500;
`;
const Account = styled.div`
  display: flex;
  align-items: center;
  gap: 70px;
  margin-left: auto;
`;
const User = styled.button`
  display: flex;
  align-items: center;
  gap: 18px;
  color: #2e3950;
`;
const Columns = styled.div`
  display: flex;
  flex: 1;
  min-height: 0;
  padding-top: 25px;
`;
const Side = styled.nav`
  flex: none;
  width: 325px;
  padding: 0 25px;
`;
const Project = styled.div`
  display: flex;
  align-items: center;
  gap: 21px;
  height: 80px;
  margin-bottom: 20px;
  padding: 0 21px;
  border-radius: 5px;
  background: ${navy};
  box-shadow: 0 10px 20px rgba(36, 46, 66, 0.25);
`;
const ProjectName = styled.div`
  color: #7b8390;
  font-size: 18px;
  font-weight: 700;
  line-height: 24px;
`;
const ProjectKind = styled.div`
  color: #5d6678;
  line-height: 24px;
`;
const MenuLink = styled.a`
  display: flex;
  align-items: center;
  gap: 16px;
  height: 50px;
  margin-bottom: ${(props) => (props.$spaced ? 4 : 0)}px;
  padding: 0 19px 0 18px;
  color: ${(props) => (props.$on ? "#2c6a63" : dim)};
  svg:first-child {
    width: 16px;
  }
  svg:not(:first-child) {
    margin-top: 2px;
    margin-left: auto;
  }
`;
const SubMenu = styled.div`
  padding: 4px 0 1px 49px;
`;
const SubLink = styled.a`
  display: block;
  color: ${(props) => (props.$on ? "#2c6a63" : dim)};
  line-height: 35px;
`;
const Main = styled.main`
  flex: 1;
  padding-right: 25px;
`;
const Card = styled.section`
  border-radius: 5px;
  background: #666c79;
  box-shadow: 0 5px 12px rgba(36, 46, 66, 0.08);
`;
const SummaryCard = styled(Card)`
  margin-bottom: 15px;
  padding-top: 130px;
`;
const SummaryFoot = styled.div`
  height: 55px;
  background: #606978;
`;
const ListCard = styled(Card)`
  overflow: hidden;
`;
const ListTools = styled.div`
  display: flex;
  align-items: center;
  justify-content: flex-end;
  height: 66px;
  padding: 0 25px 2px 0;
  border-bottom: 1px solid #606978;
  background: #646a78;
  svg {
    margin-right: 71px;
  }
  svg + svg {
    margin-right: 43px;
  }
`;
const CreateButton = styled.button`
  width: 120px;
  height: 40px;
  border-radius: 20px;
  background: ${navy};
  box-shadow: 0 8px 16px rgba(36, 46, 66, 0.25);
  color: #848b97;
  font-weight: 700;
`;
const Table = styled.table`
  width: 290px;
  margin: 0 15px 15px auto;
  border-collapse: collapse;
  color: #2e3950;
  font-family: ${plainFont};
  th {
    height: 66px;
    padding: 0 0 2px 15px;
    color: ${dim};
    font-weight: 500;
    text-align: left;
  }
  th svg {
    margin-left: 6px;
  }
  td {
    height: 71px;
    padding: 0 0 0 15px;
  }
  td:last-child {
    width: 74px;
    padding-bottom: 3px;
  }
  tr {
    border-bottom: 1px solid #606978;
  }
`;
const Pager = styled.div`
  display: flex;
  align-items: center;
  justify-content: flex-end;
  gap: 39px;
  height: 60px;
  padding: 0 36px 2px 0;
  background: #646978;
  color: #2e3950;
  font-family: ${plainFont};
  font-weight: 700;
`;
const Toolbox = styled.button`
  position: absolute;
  right: 0;
  bottom: 80px;
  width: 36px;
  height: 40px;
  border-radius: 20px 0 0 20px;
  background: ${navy};
  box-shadow: 0 6px 14px rgba(36, 46, 66, 0.3);
`;

const Layer = styled.div`
  position: absolute;
  inset: 0;
  display: flex;
  justify-content: center;
  padding: 17px 0;
`;
const Dialog = styled.div`
  position: relative;
  display: flex;
  flex-direction: column;
  width: 100%;
  max-width: 1200px;
  border-radius: 5px;
  background: #fff;
  box-shadow: 0 4px 20px rgba(36, 46, 66, 0.25);
  color: ${navy};
`;
const DialogHead = styled.div`
  display: flex;
  flex: none;
  align-items: center;
  height: 76px;
  padding: 0 25px;
  border-bottom: 1px solid #ccd3db;
  border-radius: 5px 5px 0 0;
  background: #f9fbfd;
`;
const DialogTitle = styled.h1`
  flex: 1;
  margin: 0;
  padding-bottom: 3px;
  font-size: 15px;
  font-weight: 700;
`;
const YamlButton = styled.button`
  display: flex;
  align-items: center;
  gap: 8px;
  height: 40px;
  margin-right: 26px;
  padding: 0 26px;
  border-radius: 20px;
  background: #c1c9d1;
  color: ${dim};
  font-family: ${plainFont};
  font-weight: 700;
`;
const CloseButton = styled(IconButton)`
  width: 39px;
  height: 40px;
  border-radius: 5px;
  background: ${navy};
  box-shadow: 0 8px 16px rgba(36, 46, 66, 0.28);
  color: #fff;
`;
const Steps = styled.div`
  display: flex;
  flex: none;
  height: 80px;
  padding-left: 25px;
  background: #eff4f9;
`;
const Step = styled.button`
  display: flex;
  align-items: center;
  gap: 20px;
  width: 225px;
  padding-left: 24px;
  background: ${(props) => (props.$on ? "#fff" : "transparent")};
  text-align: left;
`;
const StepPicture = styled.span`
  position: relative;
  display: flex;
  align-items: center;
  justify-content: center;
  width: 40px;
  height: 42px;
`;
const StepDot = styled.i`
  position: absolute;
  right: -5px;
  bottom: -5px;
  width: 15px;
  height: 15px;
  border: 2px solid ${(props) => (props.$state ? "#55bc8a" : "#ccd3db")};
  border-radius: 50%;
  background: ${(props) => (props.$state === "done" ? "#55bc8a" : "#fff")};
`;
const StepName = styled.div`
  font-weight: 700;
  line-height: 25px;
`;
const StepStatus = styled.div`
  color: #79879c;
  line-height: 25px;
`;
const DialogBody = styled.div`
  position: relative;
  display: flex;
  flex: 1;
  min-height: 0;
  overflow: hidden;
`;
const Content = styled.div`
  flex: 1;
  padding: 0 15px 0 16px;
  overflow: hidden;
`;
const Heading = styled.h2`
  display: flex;
  align-items: center;
  gap: 12px;
  height: 66px;
  margin: 0;
  padding: 8px 0 0 3px;
  font-size: 20px;
  text-shadow: 0 4px 8px rgba(36, 46, 66, 0.1);
`;
const Scrollbar = styled.div`
  display: flex;
  flex: none;
  flex-direction: column;
  align-items: center;
  gap: 8px;
  width: ${(props) => (props.$small ? 18 : 19)}px;
  padding: 9px 1px 8px 0;
  background: #fbfbfb;
`;
const Thumb = styled.div`
  width: 11px;
  height: ${(props) => props.$height}px;
  border-radius: 6px;
  background: #8b8b8b;
`;
const Spacer = styled.div`
  flex: 1;
`;
const Panel = styled.section`
  padding: 15px 20px;
  border: 1px solid #ccd3db;
  border-radius: 5px;
`;
const PanelTitle = styled.h3`
  margin: 0;
  color: ${dim};
  font-size: 15px;
  line-height: 24px;
`;
const PanelText = styled.p`
  margin: 0;
  color: #79879c;
  line-height: 26px;
`;
const Label = styled.label`
  display: block;
  color: ${dim};
  line-height: 24px;
`;
const Required = styled.span`
  margin-left: 3px;
  color: #ca2621;
`;
const ImageField = styled.div`
  position: relative;
  display: flex;
  align-items: center;
  height: 42px;
  margin-top: 5px;
  padding: 0 26px 0 6px;
  border: 1px solid #ccd3db;
  border-radius: 5px;
`;
const RegistryButton = styled.button`
  display: flex;
  align-items: center;
  justify-content: space-between;
  width: 188px;
  height: 28px;
  padding: 0 12px 0 8px;
  border-radius: 3px;
  background: ${navy};
  color: #fff;
  font-weight: 700;
`;
const ImageInput = styled.input`
  flex: 1;
  min-width: 0;
  margin-left: 7px;
  outline: 0;
  &::placeholder {
    color: #a3abb8;
  }
`;
const Dropdown = styled.div`
  position: absolute;
  top: 44px;
  left: 7px;
  display: flex;
  width: 299px;
  height: 130px;
  overflow: hidden;
  border-radius: 4px;
  background: ${navy};
  box-shadow: 0 4px 16px rgba(36, 46, 66, 0.4);
  font-family: ${plainFont};
`;
const Options = styled.div`
  flex: 1;
  padding-top: 5px;
`;
const Option = styled.div`
  display: flex;
  align-items: center;
  justify-content: space-between;
  height: 40px;
  padding: 0 15px;
  background: ${(props) => (props.$on ? dim : "transparent")};
  color: #fff;
  white-space: nowrap;
`;
const DefaultTag = styled.span`
  padding: 0 5px;
  border-radius: 3px;
  background: #55bc8a;
  font-weight: 700;
  line-height: 25px;
`;
const Hint = styled.p`
  margin: 5px 0 0;
  color: #79879c;
  line-height: 25px;
  white-space: nowrap;
  a {
    color: #55bc8a;
  }
`;
const EmptyImage = styled.div`
  display: flex;
  flex-direction: column;
  align-items: center;
  justify-content: center;
  gap: 27px;
  height: 176px;
  margin-top: 14px;
  padding-top: 10px;
  border-radius: 5px;
  background: #f9fbfd;
  color: #79879c;
`;
const Advanced = styled.button`
  display: flex;
  align-items: center;
  gap: 7px;
  margin: 3px 0 16px;
  color: #329dce;
  line-height: 24px;
`;
const Pair = styled.div`
  display: grid;
  grid-template-columns: 1fr 1fr;
  gap: 30px;
`;
const TextInput = styled.input`
  display: block;
  width: 100%;
  height: 40px;
  margin-top: 5px;
  padding: 0 15px;
  border: 1px solid #abb4be;
  border-radius: 5px;
  color: ${dim};
  font-family: ${plainFont};
  font-weight: 700;
`;
const SelectBox = styled.div`
  display: flex;
  align-items: center;
  justify-content: space-between;
  height: 40px;
  margin-top: 5px;
  padding: 0 18px 0 15px;
  border: 1px solid #abb4be;
  border-radius: 5px;
`;
const Select = styled.select`
  height: 25px;
  padding: 0 5px;
  appearance: none;
  border-radius: 3px;
  background: ${navy};
  color: #fff;
  font-weight: 700;
`;
const NextNotice = styled.div`
  height: 60px;
  margin-top: 55px;
  border-radius: 5px;
  background: #c7deef;
`;
const ConfirmBar = styled.div`
  position: absolute;
  right: 25px;
  bottom: 10px;
  left: 25px;
  display: flex;
  align-items: center;
  justify-content: flex-end;
  gap: 67px;
  height: 45px;
  padding: 2px 41px 0 0;
  border-radius: 5px;
  background: ${navy};
  color: #fff;
`;
const DialogFoot = styled.div`
  display: flex;
  flex: none;
  align-items: center;
  justify-content: flex-end;
  gap: 15px;
  height: 70px;
  padding: 0 25px;
  border-radius: 0 0 5px 5px;
  background: #f9fbfd;
`;
const FootButton = styled.button`
  height: 40px;
  padding: 0 28px;
  border: 1px solid #ccd3db;
  border-radius: 20px;
  background: #eff4f9;
  color: ${dim};
  font-weight: 700;
  ${(props) =>
    props.$primary &&
    css`
      border-color: #7b8190;
      background: #7b8190;
      box-shadow: 0 8px 16px rgba(36, 46, 66, 0.2);
      color: #fff;
    `}
`;
const RedMark = styled.div`
  position: absolute;
  top: 269px;
  left: -58px;
  width: 445px;
  height: 258px;
  border: 3px solid #fa3534;
  pointer-events: none;
`;
const Watermark = styled.div`
  position: fixed;
  right: 14px;
  bottom: 8px;
  color: #d3d5d8;
  font-family: "Noto Sans", sans-serif;
  font-size: 18px;
  text-shadow: 1px 1px 1px #444;
`;

export default App;
